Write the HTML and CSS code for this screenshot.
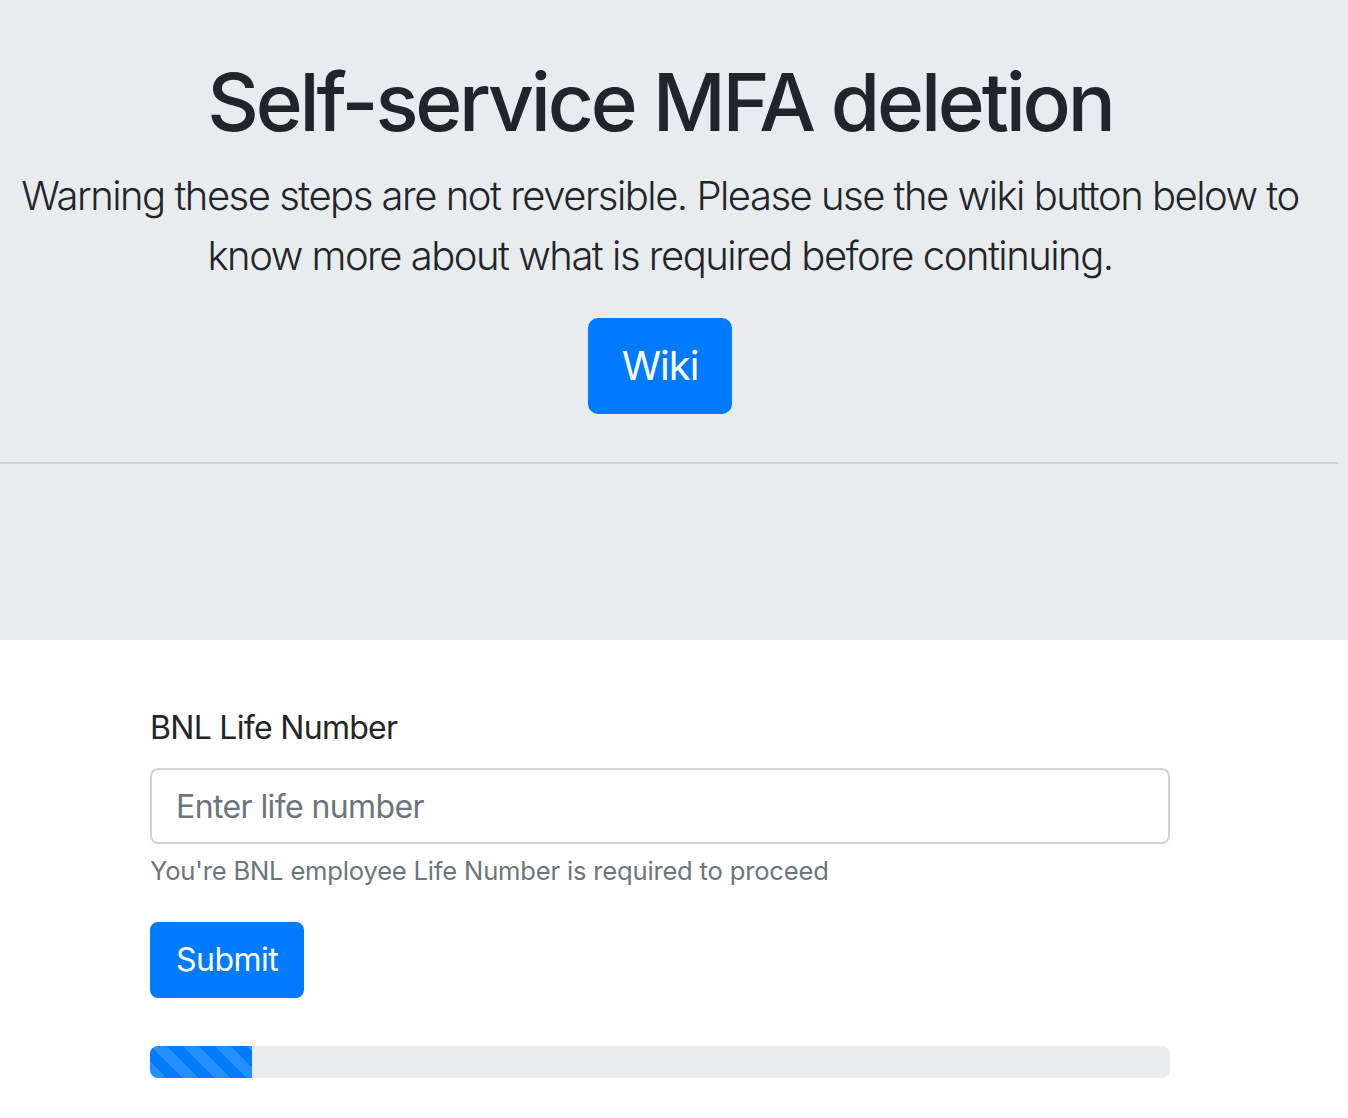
FILE: index.html
```html
<!DOCTYPE html>
<html lang="en">
<head>
<meta charset="utf-8">
<title>Self-service MFA deletion</title>
<link rel="stylesheet" href="styles.css">
</head>
<body>
<header class="jumbotron">
  <div class="hero">
    <h1 class="title">Self-service MFA deletion</h1>
    <p class="lead">Warning these steps are not reversible. Please use the wiki button below to know more about what is required before continuing.</p>
    <div class="hero-actions">
      <a class="btn btn-lg" href="#">Wiki</a>
    </div>
  </div>
  <hr class="divider">
</header>
<main class="container">
  <form class="form">
    <div class="form-group">
      <label class="label" for="life">BNL Life Number</label>
      <input class="input" id="life" type="text" placeholder="Enter life number">
      <small class="help">You're BNL employee Life Number is required to proceed</small>
    </div>
    <button class="btn btn-md" type="button">Submit</button>
  </form>
  <div class="progress">
    <div class="progress-bar" style="width: 10%"></div>
  </div>
</main>
</body>
</html>
```
FILE: styles.css
```css
* { box-sizing: border-box; }
html, body { margin: 0; padding: 0; }
body {
  font-family: Inter, "Noto Sans", "Liberation Sans", sans-serif;
  color: #212529;
  background: #fff;
}
.jumbotron {
  background: #e9ecef;
  padding: 54px 0 128px;
}
.hero {
  width: 1320px;
  text-align: center;
}
.title {
  margin: 0 0 16px;
  font-size: 80px;
  line-height: 96px;
  font-weight: 500;
  letter-spacing: -3.2px;
}
.lead {
  margin: 0;
  font-size: 40px;
  line-height: 60px;
  font-weight: 300;
  letter-spacing: -1.5px;
}
.hero-actions {
  margin-top: 32px;
  display: flex;
  justify-content: center;
}
.btn {
  display: inline-block;
  background: #007bff;
  color: #fff;
  text-decoration: none;
  border: 2px solid #007bff;
  font-family: inherit;
  font-weight: 400;
  cursor: pointer;
}
.btn-lg {
  font-size: 40px;
  line-height: 60px;
  padding: 16px 32px;
  border-radius: 10px;
  letter-spacing: -1px;
}
.btn-md {
  font-size: 32px;
  line-height: 48px;
  padding: 12px 24px;
  border-radius: 8px;
  letter-spacing: -0.5px;
}
.divider {
  width: 1338px;
  margin: 48px 0;
  border: 0;
  border-top: 2px solid rgba(0, 0, 0, 0.1);
  height: 0;
}
.container {
  width: 1020px;
  margin: 64px 0 0 150px;
  padding-bottom: 40px;
}
.form-group {
  margin-bottom: 32px;
}
.label {
  display: block;
  font-size: 32px;
  line-height: 48px;
  margin-bottom: 16px;
  letter-spacing: -0.7px;
}
.input {
  display: block;
  width: 100%;
  height: 76px;
  padding: 12px 24px;
  font-family: inherit;
  font-size: 32px;
  line-height: 48px;
  color: #495057;
  background: #fff;
  border: 2px solid #ced4da;
  border-radius: 8px;
  outline: none;
  letter-spacing: -0.6px;
}
.input::placeholder { color: #6c757d; opacity: 1; }
.help {
  display: block;
  margin-top: 8px;
  font-size: 25.6px;
  line-height: 38.4px;
  color: #6c757d;
  letter-spacing: -0.2px;
}
.progress {
  margin-top: 48px;
  height: 32px;
  background: #e9ecef;
  border-radius: 8px;
  overflow: hidden;
  display: flex;
}
.progress-bar {
  height: 100%;
  background-color: #007bff;
  background-image: linear-gradient(45deg, rgba(255,255,255,.15) 25%, transparent 25%, transparent 50%, rgba(255,255,255,.15) 50%, rgba(255,255,255,.15) 75%, transparent 75%, transparent);
  background-size: 32px 32px;
}
```
